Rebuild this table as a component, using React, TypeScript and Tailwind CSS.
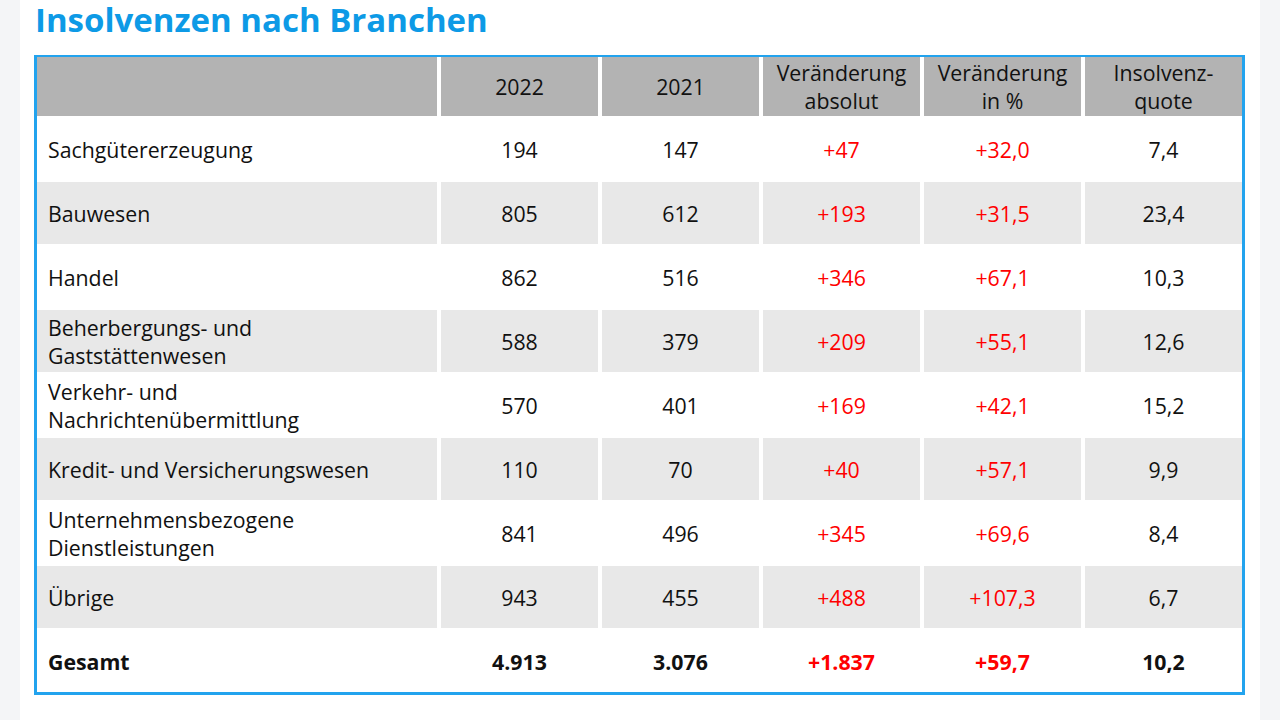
import React from 'react';

type Row = {
  label: string;
  y2022: string;
  y2021: string;
  abs: string;
  pct: string;
  quote: string;
};

const rows: Row[] = [
  { label: 'Sachgütererzeugung', y2022: '194', y2021: '147', abs: '+47', pct: '+32,0', quote: '7,4' },
  { label: 'Bauwesen', y2022: '805', y2021: '612', abs: '+193', pct: '+31,5', quote: '23,4' },
  { label: 'Handel', y2022: '862', y2021: '516', abs: '+346', pct: '+67,1', quote: '10,3' },
  { label: 'Beherbergungs- und\nGaststättenwesen', y2022: '588', y2021: '379', abs: '+209', pct: '+55,1', quote: '12,6' },
  { label: 'Verkehr- und\nNachrichtenübermittlung', y2022: '570', y2021: '401', abs: '+169', pct: '+42,1', quote: '15,2' },
  { label: 'Kredit- und Versicherungswesen', y2022: '110', y2021: '70', abs: '+40', pct: '+57,1', quote: '9,9' },
  { label: 'Unternehmensbezogene\nDienstleistungen', y2022: '841', y2021: '496', abs: '+345', pct: '+69,6', quote: '8,4' },
  { label: 'Übrige', y2022: '943', y2021: '455', abs: '+488', pct: '+107,3', quote: '6,7' },
];

const headers = ['2022', '2021', 'Veränderung\nabsolut', 'Veränderung\nin %', 'Insolvenz-\nquote'];

const App = () => {
  return (
    <div className="min-h-screen bg-[#f4f5f7] px-[20px] font-['Open_Sans',sans-serif]">
      <div className="bg-white min-h-screen pl-[14px] pr-[15px]">
        {/* Titel */}
        <h1 className="text-[33px] leading-[40px] font-bold text-[#0d9ae6] pl-[1px]">
          Insolvenzen nach Branchen
        </h1>

        {/* Tabelle */}
        <div className="mt-[15px] border-[3px] border-t-[2px] border-[#22a3ee] bg-white">
          <div className="grid grid-cols-[400px_repeat(5,1fr)] gap-x-[4px] gap-y-[2px] text-[21.3px] leading-[28px] text-[#111]">
            <div className="bg-[#b3b3b3] h-[59px]" />
            {headers.map((h) => (
              <div
                key={h}
                className="bg-[#b3b3b3] h-[59px] pt-[1px] flex items-center justify-center text-center whitespace-pre-line"
              >
                {h}
              </div>
            ))}

            {rows.map((r, i) => {
              const bg = i % 2 === 1 ? 'bg-[#e8e8e8]' : 'bg-white';
              return (
                <React.Fragment key={r.label}>
                  <div className={`${bg} h-[62px] pt-[2px] flex items-center pl-[11px] whitespace-pre-line`}>{r.label}</div>
                  <div className={`${bg} h-[62px] pt-[2px] flex items-center justify-center`}>{r.y2022}</div>
                  <div className={`${bg} h-[62px] pt-[2px] flex items-center justify-center`}>{r.y2021}</div>
                  <div className={`${bg} h-[62px] pt-[2px] flex items-center justify-center text-[#ff0000]`}>{r.abs}</div>
                  <div className={`${bg} h-[62px] pt-[2px] flex items-center justify-center text-[#ff0000]`}>{r.pct}</div>
                  <div className={`${bg} h-[62px] pt-[2px] flex items-center justify-center`}>{r.quote}</div>
                </React.Fragment>
              );
            })}

            {/* Gesamt */}
            <div className="h-[62px] pt-[2px] flex items-center pl-[11px] font-bold">Gesamt</div>
            <div className="h-[62px] pt-[2px] flex items-center justify-center font-bold">4.913</div>
            <div className="h-[62px] pt-[2px] flex items-center justify-center font-bold">3.076</div>
            <div className="h-[62px] pt-[2px] flex items-center justify-center font-bold text-[#ff0000]">+1.837</div>
            <div className="h-[62px] pt-[2px] flex items-center justify-center font-bold text-[#ff0000]">+59,7</div>
            <div className="h-[62px] pt-[2px] flex items-center justify-center font-bold">10,2</div>
          </div>
        </div>
      </div>
    </div>
  );
};

export default App;
